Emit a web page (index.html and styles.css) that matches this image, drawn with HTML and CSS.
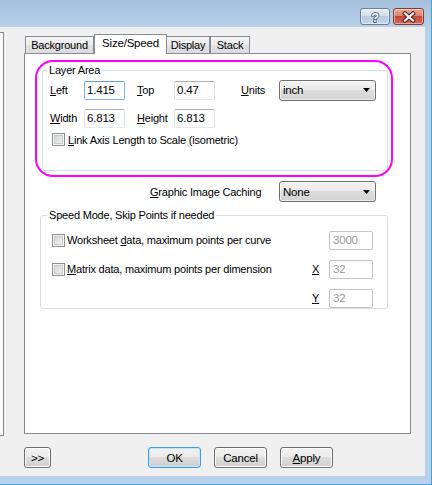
FILE: index.html
```html
<!DOCTYPE html>
<html>
<head>
<meta charset="utf-8">
<link rel="stylesheet" href="styles.css">
</head>
<body>
<div class="window">
  <div class="titlebar">
    <div class="cap-btn help">
      <svg width="12" height="14" viewBox="0 0 12 14"><text x="6" y="12" text-anchor="middle" font-family="Liberation Sans, sans-serif" font-weight="bold" font-size="13" fill="#ffffff" stroke="#3b4b63" stroke-width="1.4" paint-order="stroke">?</text></svg>
    </div>
    <div class="cap-btn close">
      <svg width="14" height="12" viewBox="0 0 14 12"><path d="M3 2.5 L11 9.5 M11 2.5 L3 9.5" stroke="#5a1d15" stroke-width="4.2" stroke-linecap="square" fill="none"/><path d="M3 2.5 L11 9.5 M11 2.5 L3 9.5" stroke="#ffffff" stroke-width="2.2" stroke-linecap="square" fill="none"/></svg>
    </div>
  </div>
  <div class="client">
    <div class="tree"></div>
    <div class="main">
      <div class="tabs">
        <div class="tab tab-bg">Background</div>
        <div class="tab tab-size active">Size/Speed</div>
        <div class="tab tab-display">Display</div>
        <div class="tab tab-stack">Stack</div>
      </div>
      <div class="panel">
        <fieldset class="group layer">
          <legend>Layer Area</legend>
          <div class="layer-grid">
            <span><u>L</u>eft</span>
            <div class="field focus">1.415</div>
            <span class="lbl-b"><u>T</u>op</span>
            <div class="field">0.47</div>
            <span class="lbl-c"><u>U</u>nits</span>
            <div class="combo"><span>inch</span><svg width="7" height="4" viewBox="0 0 7 4"><path d="M0 0 H7 L3.5 4 Z" fill="#000"/></svg></div>
            <span><u>W</u>idth</span>
            <div class="field">6.813</div>
            <span class="lbl-b"><u>H</u>eight</span>
            <div class="field">6.813</div>
          </div>
          <div class="check-row">
            <span class="check"></span>
            <span class="check-label"><u>L</u>ink Axis Length to Scale (isometric)</span>
          </div>
        </fieldset>
        <div class="cache-row">
          <span><u>G</u>raphic Image Caching</span>
          <div class="combo"><span>None</span><svg width="7" height="4" viewBox="0 0 7 4"><path d="M0 0 H7 L3.5 4 Z" fill="#000"/></svg></div>
        </div>
        <fieldset class="group speed">
          <legend>Speed Mode, Skip Points if needed</legend>
          <div class="speed-grid">
            <div class="check-item"><span class="check"></span><span class="check-text">Worksheet <u>d</u>ata, maximum points per curve</span></div>
            <div class="field disabled col-input">3000</div>
            <div class="check-item"><span class="check"></span><span class="check-text"><u>M</u>atrix data, maximum points per dimension</span></div>
            <span class="axis"><u>X</u></span>
            <div class="field disabled">32</div>
            <span class="axis col-axis"><u>Y</u></span>
            <div class="field disabled">32</div>
          </div>
        </fieldset>
        <div class="highlight"></div>
      </div>
      <div class="buttons">
        <div class="btn more">&gt;&gt;</div>
        <div class="btn default ok">OK</div>
        <div class="btn">Cancel</div>
        <div class="btn"><u>A</u>pply</div>
      </div>
    </div>
  </div>
</div>
</body>
</html>
```

FILE: styles.css
```css
html, body {
  margin: 0;
  padding: 0;
}
body {
  font-family: "Liberation Sans", Arial, sans-serif;
  font-size: 11px;
  letter-spacing: -0.2px;
  color: #000;
}
.window {
  width: 432px;
  height: 485px;
  box-sizing: border-box;
  background: #b9d1ea;
  border-right: 1px solid #3aa8da;
  border-bottom: 1px solid #3aa8da;
  display: flex;
  flex-direction: column;
}
.titlebar {
  height: 27px;
  flex: none;
  box-sizing: border-box;
  background: linear-gradient(#a4bedc, #b9d1ea);
  display: flex;
  justify-content: flex-end;
  align-items: flex-start;
  gap: 3px;
  padding: 8px 7px 0 0;
}
.cap-btn {
  width: 30px;
  height: 17px;
  box-sizing: border-box;
  border: 1px solid #6d7e97;
  border-radius: 3px;
  display: flex;
  align-items: center;
  justify-content: center;
  box-shadow: inset 0 0 0 1px rgba(255,255,255,0.45);
}
.help {
  background: linear-gradient(#e6edf6 0%, #d3dfee 45%, #b7cae2 50%, #c8d8ec 100%);
}
.close {
  width: 31px;
  border-color: #8a3a30;
  background: linear-gradient(#e9a99b 0%, #d98170 45%, #c4493b 50%, #d06a59 100%);
}
.client {
  flex: 1;
  margin-right: 6px;
  margin-bottom: 8px;
  background: #f0f0f0;
  display: flex;
  align-items: flex-start;
}
.tree {
  width: 4px;
  height: 404px;
  margin-top: 5px;
  box-sizing: border-box;
  border: 1px solid #828790;
  border-left: none;
  background: #fbfbfb;
}
.main {
  margin-left: 20px;
  margin-top: 7px;
  width: 387px;
}
.tabs {
  display: flex;
  align-items: flex-end;
  height: 19px;
  padding-left: 1px;
}
.tab {
  height: 17px;
  box-sizing: border-box;
  border: 1px solid #898c95;
  border-bottom: none;
  background: linear-gradient(#f4f4f4 0%, #ededed 50%, #e2e2e2 50%, #dcdcdc 100%);
  text-align: center;
  line-height: 16px;
}
.tab-bg { width: 69px; }
.tab-size { width: 73px; margin-left: 0; }
.tab-display { width: 44px; margin-left: -1px; }
.tab-stack { width: 40px; margin-left: 0; }
.tab.active {
  height: 20px;
  margin-bottom: -1px;
  background: #fff;
  position: relative;
  z-index: 1;
  line-height: 17px;
  font-size: 11.5px;
}
.panel {
  height: 381px;
  box-sizing: border-box;
  border: 1px solid #898c95;
  background: #fff;
  position: relative;
}
.group {
  border: 1px solid #d5dfe5;
  border-radius: 3px;
  margin: 0;
  min-width: 0;
  box-sizing: border-box;
}
.group legend {
  padding: 0 2px;
  line-height: 13px;
}
.layer {
  width: 346px;
  margin: 10px 0 0 17px;
  padding: 3px 7px 24px 7px;
}
.layer legend {
  margin-left: -3px;
}
.layer-grid {
  display: grid;
  grid-template-columns: 34px 41px 49px 41px 64px 97px;
  grid-template-rows: 20px 20px;
  row-gap: 8px;
  align-items: center;
}
.lbl-b { padding-left: 12px; }
.lbl-c { padding-left: 26px; }
.field {
  height: 19px;
  box-sizing: border-box;
  border: 1px solid;
  border-color: #abadb3 #dbdfe6 #e3e9ef #e2e3ea;
  border-radius: 2px;
  padding-left: 2px;
  line-height: 17px;
  background: #fff;
  font-size: 11.5px;
}
.field.focus {
  border-color: #569de5 #7eb4ea #7eb4ea #7eb4ea;
}
.field.disabled {
  border-color: #c3c3c3;
  color: #9a9a9a;
  padding-left: 3px;
}
.combo {
  height: 21px;
  box-sizing: border-box;
  border: 1px solid #707070;
  border-radius: 3px;
  background: linear-gradient(#f2f2f2 0%, #ebebeb 50%, #dddddd 50%, #d3d3d3 100%);
  box-shadow: inset 0 0 0 1px rgba(255,255,255,0.6);
  display: flex;
  align-items: center;
  justify-content: space-between;
  padding: 0 5px 0 3px;
  font-size: 11.5px;
}
.check {
  width: 13px;
  height: 13px;
  flex: none;
  box-sizing: border-box;
  border: 1px solid #8e8f8f;
  background: linear-gradient(135deg, #cdd0d4, #f6f6f6);
  box-shadow: inset 0 0 0 1px #f4f4f4, inset 0 0 0 2px #c9cccf;
}
.check-row {
  display: flex;
  align-items: center;
  margin-top: 5px;
  height: 13px;
}
.check-row .check { margin-left: 2px; }
.check-label { margin-left: 3px; }
.cache-row {
  display: grid;
  grid-template-columns: 129px 97px;
  align-items: center;
  padding-left: 125px;
  margin-top: 10px;
}
.speed {
  width: 348px;
  margin: 7px 0 0 15px;
  padding: 8px 14px 0 11px;
}
.speed legend {
  margin-left: -5px;
}
.speed-grid {
  display: grid;
  grid-template-columns: 1fr 18px 44px;
  grid-auto-rows: 20px;
  row-gap: 9px;
  align-items: center;
}
.check-item {
  display: flex;
  align-items: center;
}
.check-text { margin-left: 2px; }
.col-input { grid-column: 3; }
.col-axis { grid-column: 2; }
.axis { padding-left: 1px; }
.highlight {
  position: absolute;
  left: 10px;
  top: 6px;
  width: 358px;
  height: 117px;
  box-sizing: border-box;
  border: 2.5px solid #ff00ff;
  border-radius: 18px;
  pointer-events: none;
}
.buttons {
  display: flex;
  gap: 13px;
  margin-top: 13px;
}
.btn {
  width: 53px;
  height: 21px;
  box-sizing: border-box;
  border: 1px solid #707070;
  border-radius: 3px;
  background: linear-gradient(#f2f2f2 0%, #ebebeb 50%, #dddddd 50%, #cfcfcf 100%);
  box-shadow: inset 0 0 0 1px #fcfcfc;
  display: flex;
  align-items: center;
  justify-content: center;
  font-size: 11.5px;
}
.btn.more { width: 27px; }
.btn.ok { margin-left: 84px; }
.btn.default {
  border-color: #3c9ee0;
  box-shadow: inset 0 0 0 1px #c4e4f8;
}
```
